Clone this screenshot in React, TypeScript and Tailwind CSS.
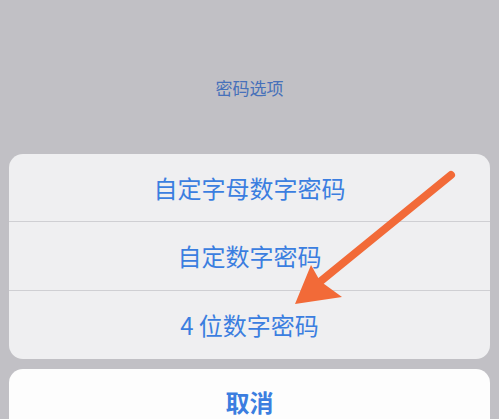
import React from "react";

export default function App() {
  const font = { fontFamily: '"Noto Sans CJK SC", "Noto Sans", sans-serif' };
  return (
    <div
      className="relative w-[499px] h-[419px] overflow-hidden bg-[#c1c0c5] px-[9px]"
      style={font}
    >
      <div className="pt-[77px] pb-[55px] text-center text-[17px] leading-[22px] text-[#4771ba]">
        密码选项
      </div>
      <div className="rounded-[14px] bg-[#efeff1] overflow-hidden">
        <div className="h-[68px] flex items-center justify-center text-[24px] text-[#3b7ee0] border-b border-[#cfcfd3]">
          自定字母数字密码
        </div>
        <div className="h-[69px] flex items-center justify-center text-[24px] text-[#3b7ee0] border-b border-[#cfcfd3]">
          自定数字密码
        </div>
        <div className="h-[68px] flex items-center justify-center text-[24px] text-[#3b7ee0]">
          4 位数字密码
        </div>
      </div>
      <div className="mt-[10px] h-[60px] rounded-t-[14px] bg-[#fdfdfd] pt-[21px] text-center text-[24px] leading-[24px] font-bold text-[#3b7ee0]">
        取消
      </div>
      <svg
        className="absolute left-0 top-0 pointer-events-none"
        width="499"
        height="419"
        viewBox="0 0 499 419"
      >
        <line
          x1="451"
          y1="175"
          x2="316"
          y2="285"
          stroke="#f26a38"
          strokeWidth="8"
          strokeLinecap="round"
        />
        <polygon
          points="295,304 311,265 320,281 342,297"
          fill="#f26a38"
        />
      </svg>
    </div>
  );
}
